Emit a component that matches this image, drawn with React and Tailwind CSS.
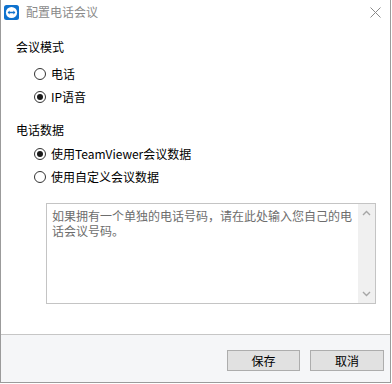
import { useState } from 'react';

function Radio({ checked, label, onClick }) {
  return (
    <div className="flex h-[23px] items-center cursor-default" onClick={onClick}>
      <span className="ml-[18px] flex h-[12px] w-[12px] items-center justify-center rounded-full border border-[#333] bg-white">
        {checked && <span className="h-[6px] w-[6px] rounded-full bg-[#1a1a1a]" />}
      </span>
      <span className="ml-[5px] text-[12px] leading-[16px] text-black">{label}</span>
    </div>
  );
}

function TVIcon() {
  return (
    <svg width="15" height="15" viewBox="0 0 15 15">
      <rect x="0" y="0" width="15" height="15" rx="2.5" fill="#0e72ce" />
      <circle cx="7.5" cy="7.5" r="5.6" fill="#fff" />
      <path d="M3.6 7.5 L5.6 5.6 V6.8 H9.4 V5.6 L11.4 7.5 L9.4 9.4 V8.2 H5.6 V9.4 Z" fill="#0e72ce" />
    </svg>
  );
}

export default function App() {
  const [mode, setMode] = useState('ip');
  const [data, setData] = useState('tv');

  return (
    <div
      className="h-[384px] w-[392px] bg-white"
      style={{ fontFamily: '"Noto Sans CJK SC", "Microsoft YaHei", sans-serif' }}
    >
      <div className="flex h-[383px] w-[391px] flex-col border-x border-b border-[#9b9b9b] bg-white">
        {/* title bar */}
        <div className="flex h-[24px] items-center">
          <div className="ml-[3px]">
            <TVIcon />
          </div>
          <span className="ml-[7px] text-[12px] leading-[16px] text-[#8a8a8a]">配置电话会议</span>
          <div className="ml-auto mr-[9px] flex h-[12px] w-[12px] items-center justify-center">
            <svg width="11" height="11" viewBox="0 0 11 11">
              <path d="M0.5 0.5 L10.5 10.5 M10.5 0.5 L0.5 10.5" stroke="#8a8a8a" strokeWidth="1" />
            </svg>
          </div>
        </div>

        {/* body */}
        <div className="flex-1 pl-[15px]">
          <div className="mt-[15px] text-[12px] leading-[16px] text-black">会议模式</div>
          <div className="mt-[7px]">
            <Radio checked={mode === 'phone'} label="电话" onClick={() => setMode('phone')} />
            <Radio checked={mode === 'ip'} label="IP语音" onClick={() => setMode('ip')} />
          </div>

          <div className="mt-[14px] text-[12px] leading-[16px] text-black">电话数据</div>
          <div className="mt-[4px]">
            <Radio checked={data === 'tv'} label="使用TeamViewer会议数据" onClick={() => setData('tv')} />
            <Radio checked={data === 'custom'} label="使用自定义会议数据" onClick={() => setData('custom')} />
          </div>

          <div className="ml-[30px] mt-[15px] flex h-[101px] w-[330px] border border-[#c4c4c4] bg-white">
            <div className="flex-1 pl-[5px] pt-[4px] text-[12px] leading-[15px] text-[#6d6d6d]">
              如果拥有一个单独的电话号码，请在此处输入您自己的电
              <br />
              话会议号码。
            </div>
            <div className="flex w-[17px] flex-col items-center justify-between bg-[#f0f0f0] py-[6px]">
              <svg width="9" height="6" viewBox="0 0 9 6">
                <path d="M1 5 L4.5 1.5 L8 5" stroke="#a6a6a6" strokeWidth="1.4" fill="none" />
              </svg>
              <svg width="9" height="6" viewBox="0 0 9 6">
                <path d="M1 1 L4.5 4.5 L8 1" stroke="#a6a6a6" strokeWidth="1.4" fill="none" />
              </svg>
            </div>
          </div>
        </div>

        {/* footer */}
        <div className="flex h-[48px] justify-end gap-[10px] border-t border-[#c6c6c6] bg-[#f5f6f8] pr-[6px] pt-[15px]">
          <button className="h-[21px] w-[73px] border border-[#adadad] bg-[#e1e1e1] text-[12px] leading-[16px] text-black">
            保存
          </button>
          <button className="h-[21px] w-[74px] border border-[#adadad] bg-[#e1e1e1] text-[12px] leading-[16px] text-black">
            取消
          </button>
        </div>
      </div>
    </div>
  );
}
